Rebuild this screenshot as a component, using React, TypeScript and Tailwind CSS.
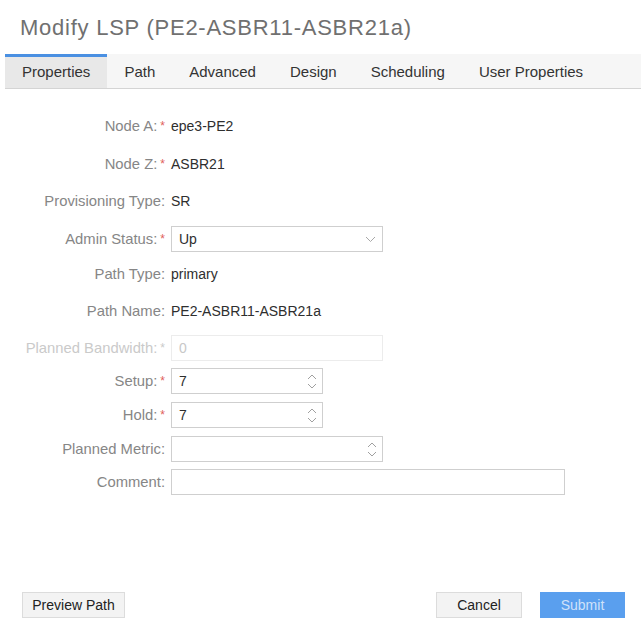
import React from "react";

const Star = () => (
  <span className="text-[#e0605a] text-[12px] ml-[3px] relative top-[-1px]">*</span>
);

const Stepper = () => (
  <svg width="10" height="17" viewBox="0 0 10 17" fill="none" stroke="#a0a0a0" strokeWidth="1">
    <polyline points="1,6 5,2 9,6" />
    <polyline points="1,11 5,15 9,11" />
  </svg>
);

const Chevron = () => (
  <svg width="11" height="7" viewBox="0 0 11 7" fill="none" stroke="#a8a8a8" strokeWidth="1">
    <polyline points="1,1 5.5,5.5 10,1" />
  </svg>
);

function Row({
  label,
  required,
  disabled,
  children,
  className = "",
}: {
  label: string;
  required?: boolean;
  disabled?: boolean;
  children?: React.ReactNode;
  className?: string;
}) {
  return (
    <div className={`flex items-center h-[26px] ${className}`}>
      <div
        className={`w-[165px] text-right text-[14.8px] whitespace-nowrap ${
          disabled ? "text-[#cacaca]" : "text-[#868686]"
        }`}
      >
        {label}
        {required &&
          (disabled ? (
            <span className="text-[#cacaca] text-[12px] ml-[3px] relative top-[-1px]">*</span>
          ) : (
            <Star />
          ))}
      </div>
      <div className="ml-[6px] flex items-center text-[14px] text-[#2e2e2e]">{children}</div>
    </div>
  );
}

export default function App() {
  const tabs = ["Properties", "Path", "Advanced", "Design", "Scheduling", "User Properties"];
  return (
    <div className="w-[641px] h-[634px] bg-white flex flex-col font-['Liberation_Sans',Arial,sans-serif]">
      <h1 className="h-[54px] pl-[20px] pt-[14px] text-[22px] tracking-[0.75px] leading-[28px] text-[#707070] font-normal">
        Modify LSP (PE2-ASBR11-ASBR21a)
      </h1>
      <div className="ml-[5px] flex h-[35px] bg-[#f6f6f6] border-b border-[#d4d4d4]">
        {tabs.map((t, i) =>
          i === 0 ? (
            <div
              key={t}
              className="px-[17px] flex items-center text-[15px] text-[#333] bg-[#e8e8e8] border-t-[3px] border-[#4a90e2] pb-[1px]"
            >
              {t}
            </div>
          ) : (
            <div key={t} className="px-[17px] flex items-center text-[15px] text-[#333] pt-[2px]">
              {t}
            </div>
          )
        )}
      </div>

      <div className="flex flex-col mt-[24px]">
        <Row label="Node A:" required>epe3-PE2</Row>
        <Row label="Node Z:" required className="mt-[12px]">ASBR21</Row>
        <Row label="Provisioning Type:" className="mt-[11px]">SR</Row>
        <Row label="Admin Status:" required className="mt-[12px]">
          <div className="w-[212px] h-[26px] border border-[#cfcfcf] flex items-center justify-between pl-[7px] pr-[6px]">
            <span>Up</span>
            <Chevron />
          </div>
        </Row>
        <Row label="Path Type:" className="mt-[9px]">primary</Row>
        <Row label="Path Name:" className="mt-[11px]">PE2-ASBR11-ASBR21a</Row>
        <Row label="Planned Bandwidth:" required disabled className="mt-[11px]">
          <div className="w-[212px] h-[26px] border border-[#ececec] flex items-center pl-[7px] text-[#c8c8c8]">
            0
          </div>
        </Row>
        <Row label="Setup:" required className="mt-[7px]">
          <div className="w-[152px] h-[26px] border border-[#cfcfcf] flex items-center justify-between pl-[7px] pr-[5px]">
            <span>7</span>
            <Stepper />
          </div>
        </Row>
        <Row label="Hold:" required className="mt-[8px]">
          <div className="w-[152px] h-[26px] border border-[#cfcfcf] flex items-center justify-between pl-[7px] pr-[5px]">
            <span>7</span>
            <Stepper />
          </div>
        </Row>
        <Row label="Planned Metric:" className="mt-[8px]">
          <div className="w-[212px] h-[26px] border border-[#cfcfcf] flex items-center justify-end pr-[5px]">
            <Stepper />
          </div>
        </Row>
        <Row label="Comment:" className="mt-[7px]">
          <div className="w-[394px] h-[26px] border border-[#cfcfcf]" />
        </Row>
      </div>

      <div className="mt-auto mb-[16px] flex items-center justify-between pl-[22px] pr-[16px]">
        <button className="h-[26px] w-[103px] bg-[#f3f3f3] border border-[#dcdcdc] text-[14px] text-[#222]">
          Preview Path
        </button>
        <div className="flex gap-[18px]">
          <button className="h-[26px] w-[86px] bg-[#f3f3f3] border border-[#dcdcdc] text-[14px] text-[#222]">
            Cancel
          </button>
          <button className="h-[26px] w-[85px] bg-[#5a9fee] text-[14px] text-[#cfe2fa]">Submit</button>
        </div>
      </div>
    </div>
  );
}
